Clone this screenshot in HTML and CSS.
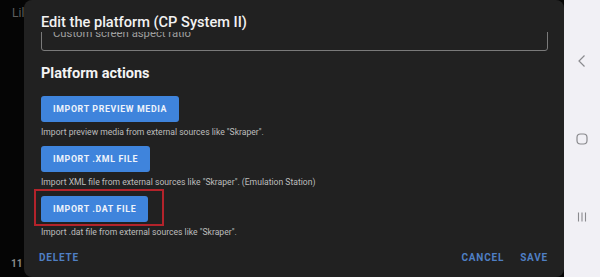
FILE: index.html
```html
<!DOCTYPE html>
<html lang="en">
<head>
<meta charset="utf-8">
<link rel="stylesheet" href="styles.css">
</head>
<body>
<div class="screen">
  <div class="app">
    <div class="app-top">Lil</div>
    <div class="app-bottom">11</div>
    <div class="dialog">
      <div class="dialog-title">Edit the platform (CP System II)</div>
      <div class="dialog-body">
        <div class="scroll">
          <div class="field"><span class="field-text">Custom screen aspect ratio</span></div>
          <h2 class="section">Platform actions</h2>
          <div class="action">
            <button class="btn">IMPORT PREVIEW MEDIA</button>
            <p class="desc">Import preview media from external sources like "Skraper".</p>
          </div>
          <div class="action">
            <button class="btn">IMPORT .XML FILE</button>
            <p class="desc">Import XML file from external sources like "Skraper". (Emulation Station)</p>
          </div>
          <div class="action marked">
            <button class="btn">IMPORT .DAT FILE</button>
            <span class="highlight"></span>
            <p class="desc">Import .dat file from external sources like "Skraper".</p>
          </div>
        </div>
      </div>
      <div class="dialog-actions">
        <span class="txt-btn">DELETE</span>
        <span class="spacer"></span>
        <span class="txt-btn">CANCEL</span>
        <span class="txt-btn">SAVE</span>
      </div>
    </div>
  </div>
  <nav class="navbar">
    <svg class="nav-icon" width="12" height="14" viewBox="0 0 12 14"><path d="M8.5 1.5 L3 7 L8.5 12.5" fill="none" stroke="#8a8a8e" stroke-width="1.2"/></svg>
    <svg class="nav-icon" width="14" height="14" viewBox="0 0 14 14"><rect x="2" y="2" width="10" height="10" rx="3.5" fill="none" stroke="#8a8a8e" stroke-width="1.2"/></svg>
    <svg class="nav-icon" width="14" height="14" viewBox="0 0 14 14"><path d="M3.5 2.5 V11.5 M7 2.5 V11.5 M10.5 2.5 V11.5" fill="none" stroke="#8a8a8e" stroke-width="1.1"/></svg>
  </nav>
</div>
</body>
</html>
```
FILE: styles.css
```css
* { box-sizing: border-box; }
html, body { margin: 0; padding: 0; }
body {
  width: 600px;
  height: 277px;
  overflow: hidden;
  font-family: Roboto, "Noto Sans", sans-serif;
  background: #000;
}
.screen {
  display: flex;
  width: 600px;
  height: 277px;
}
.app {
  position: relative;
  flex: 1;
  background: #050505;
  display: flex;
  flex-direction: column;
  justify-content: space-between;
  padding: 6px 0 8px 11px;
  color: #6a6a6a;
  font-size: 11px;
}
.app-top { color: #5d5d5d; font-size: 12px; padding-left: 1px; }
.app-bottom { color: #8a8a8a; font-weight: 700; font-size: 10px; }
.dialog {
  position: absolute;
  left: 24px;
  top: 0;
  width: 540px;
  height: 277px;
  background: #212121;
  border-radius: 8px;
  display: flex;
  flex-direction: column;
}
.dialog-title {
  position: relative;
  z-index: 1;
  height: 32px;
  padding: 14px 0 0 17px;
  color: #f2f2f2;
  font-size: 14.6px;
  line-height: 17px;
  font-weight: 500;
  white-space: nowrap;
}
.dialog-body {
  flex: 1;
  overflow: hidden;
  padding: 0 16px 0 17px;
}
.scroll {
  margin-top: -21px;
}
.field {
  height: 40px;
  border: 1px solid #7a7a7a;
  border-radius: 3px;
  padding: 16px 0 0 11px;
  color: #a0a0a0;
  font-size: 11.3px;
  line-height: 12px;
  white-space: nowrap;
}
.section {
  margin: 14px 0 14px;
  color: #f4f4f4;
  font-size: 14.5px;
  font-weight: 700;
  line-height: 17px;
}
.action {
  position: relative;
  display: flex;
  flex-direction: column;
  align-items: flex-start;
}
.btn {
  height: 26px;
  padding: 0 12px;
  border: none;
  border-radius: 3px;
  background: #3f84dc;
  color: #eef3fb;
  font-family: Roboto, "Noto Sans", sans-serif;
  font-size: 8.8px;
  font-weight: 700;
  letter-spacing: 0.65px;
}
.desc {
  margin: 4px 0 8px;
  color: #bdbdbd;
  font-size: 8.6px;
  line-height: 12px;
  white-space: nowrap;
}
.highlight {
  position: absolute;
  left: -7px;
  top: -7px;
  width: 130px;
  height: 37px;
  border: 2px solid #b3232b;
}
.dialog-actions {
  height: 40px;
  display: flex;
  align-items: center;
  gap: 16px;
  padding: 1px 16px 0 15px;
}
.spacer { flex: 1; }
.txt-btn {
  color: #4f7fc4;
  font-size: 10px;
  font-weight: 700;
  letter-spacing: 0.8px;
}
.navbar {
  width: 36px;
  background: #f1f0f5;
  display: flex;
  flex-direction: column;
  align-items: center;
  justify-content: center;
  gap: 64px;
}
.nav-icon { display: block; }
```
